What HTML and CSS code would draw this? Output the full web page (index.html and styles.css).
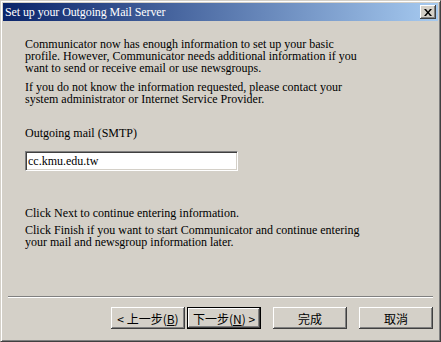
FILE: index.html
```html
<!DOCTYPE html>
<html lang="zh-TW">
<head>
    <meta charset="UTF-8">
    <title>Set up your Outgoing Mail Server</title>
    <link rel="stylesheet" href="styles.css">
</head>
<body>
    <div class="window">
        <div class="titlebar">
            <span class="title">Set up your Outgoing Mail Server</span>
            <button class="close" type="button">
                <svg width="8" height="7" viewBox="0 0 8 7">
                    <path d="M0 0h2l2 2.5L6 0h2L5 3.5 8 7H6L4 4.5 2 7H0l3-3.5z" fill="#000"/>
                </svg>
            </button>
        </div>
        <div class="content">
            <p>Communicator now has enough information to set up your basic profile. However, Communicator needs additional information if you want to send or receive email or use newsgroups.</p>
            <p>If you do not know the information requested, please contact your system administrator or Internet Service Provider.</p>
            <label class="field-label" for="smtp">Outgoing mail (SMTP)</label>
            <input class="field" id="smtp" type="text" value="cc.kmu.edu.tw">
            <p class="hint">Click Next to continue entering information.</p>
            <p>Click Finish if you want to start Communicator and continue entering your mail and newsgroup information later.</p>
        </div>
        <div class="separator"></div>
        <div class="buttons">
            <div class="nav">
                <button class="btn" type="button">&lt; 上一步(<u>B</u>)</button>
                <button class="btn default" type="button">下一步(<u>N</u>) &gt;</button>
            </div>
            <button class="btn" type="button">完成</button>
            <button class="btn" type="button">取消</button>
        </div>
    </div>
</body>
</html>
```

FILE: styles.css
```css
body {
    margin: 0;
    background-color: #d4d0c8;
    font-family: "Liberation Serif", "Noto Sans CJK TC", serif;
    font-size: 12px;
}
.window {
    width: 441px;
    height: 342px;
    box-sizing: border-box;
    padding: 2px;
    background-color: #d4d0c8;
    border-top: 1px solid #d4d0c8;
    border-left: 1px solid #d4d0c8;
    border-right: 1px solid #404040;
    border-bottom: 1px solid #404040;
    box-shadow: inset 1px 1px 0 #fff, inset -1px -1px 0 #808080;
    display: flex;
    flex-direction: column;
}
.titlebar {
    height: 18px;
    background: linear-gradient(to right, #0a246a, #a6caf0);
    display: flex;
    align-items: center;
    justify-content: space-between;
    padding: 0 2px 0 2px;
}
.title {
    color: #fff;
    font-size: 12px;
    letter-spacing: -0.1px;
}
.close {
    width: 16px;
    height: 14px;
    padding: 0;
    background-color: #d4d0c8;
    border: none;
    box-shadow: inset -1px -1px 0 #404040, inset 1px 1px 0 #fff, inset -2px -2px 0 #808080;
    display: flex;
    align-items: center;
    justify-content: center;
}
.content {
    flex: 1;
    padding: 17px 0 0 22px;
    width: 340px;
    line-height: 12px;
}
.content p {
    margin: 0 0 7px 0;
}
.field-label {
    display: block;
    margin-top: 22px;
}
.field {
    display: block;
    width: 213px;
    height: 20px;
    box-sizing: border-box;
    margin: 12px 0 0 0;
    padding: 1px 2px 0;
    font-family: "Liberation Serif", serif;
    font-size: 12px;
    background-color: #fff;
    border-top: 1px solid #808080;
    border-left: 1px solid #808080;
    border-right: 1px solid #fff;
    border-bottom: 1px solid #fff;
    box-shadow: inset 1px 1px 0 #404040, inset -1px -1px 0 #d4d0c8;
    outline: none;
}
.content .hint {
    margin-top: 36px;
    margin-bottom: 5px;
}
.separator {
    margin: 0 5px 0 5px;
    border-top: 1px solid #808080;
    border-bottom: 1px solid #fff;
}
.buttons {
    display: flex;
    justify-content: flex-end;
    gap: 12px;
    padding: 9px 5px 10px 0;
}
.nav {
    display: flex;
    gap: 2px;
}
.btn {
    width: 74px;
    height: 22px;
    padding: 0;
    font-family: "Noto Sans CJK TC", sans-serif;
    font-size: 12px;
    color: #000;
    background-color: #d4d0c8;
    border: none;
    box-shadow: inset -1px -1px 0 #404040, inset 1px 1px 0 #fff, inset -2px -2px 0 #808080;
}
.btn.default {
    border: 1px solid #000;
}
```
